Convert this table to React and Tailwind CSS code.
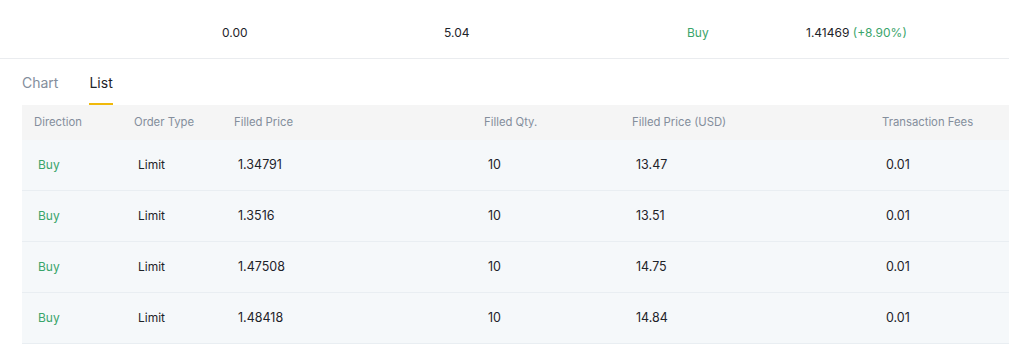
import React from "react";

const rows = [
  ["Buy", "Limit", "1.34791", "10", "13.47", "0.01"],
  ["Buy", "Limit", "1.3516", "10", "13.51", "0.01"],
  ["Buy", "Limit", "1.47508", "10", "14.75", "0.01"],
  ["Buy", "Limit", "1.48418", "10", "14.84", "0.01"],
];

const cols = "grid grid-cols-[100px_100px_250px_148px_250px_1fr]";

export default function App() {
  return (
    <div className="w-[1009px] h-[359px] bg-white overflow-hidden font-['Inter',sans-serif] text-[#1e2329]">
      <div className="h-[59px] border-b border-[#eaecef] grid grid-cols-[222px_222px_243px_119px_1fr] items-center text-[12px] pt-[7px]">
        <span></span>
        <span>0.00</span>
        <span>5.04</span>
        <span className="text-[#3aa56b]">Buy</span>
        <span>
          1.41469 <span className="text-[#3aa56b]">(+8.90%)</span>
        </span>
      </div>
      <div className="flex pl-[22px] gap-[31px] text-[14px] h-[46px]">
        <div className="flex items-center text-[#848e9c]">Chart</div>
        <div className="relative flex items-center">
          List
          <span className="absolute left-0 right-0 bottom-0 h-[2px] bg-[#f0b90b]"></span>
        </div>
      </div>
      <div className="ml-[22px]">
        <div className={`${cols} h-[35px] items-center bg-[#f5f5f5] text-[#848e9c] text-[11.3px]`}>
          <div className="pl-[12px]">Direction</div>
          <div className="pl-[12px]">Order Type</div>
          <div className="pl-[12px]">Filled Price</div>
          <div className="pl-[12px]">Filled Qty.</div>
          <div className="pl-[12px]">Filled Price (USD)</div>
          <div className="pl-[12px]">Transaction Fees</div>
        </div>
        {rows.map((r, i) => (
          <div key={i} className={`${cols} h-[51px] items-center bg-[#f5f8fa] border-b border-[#e9eef2] text-[12.5px]`}>
            <div className="pl-[16px] text-[#3aa56b] text-[12px]">{r[0]}</div>
            <div className="pl-[16px] text-[12px]">{r[1]}</div>
            <div className="pl-[16px]">{r[2]}</div>
            <div className="pl-[16px]">{r[3]}</div>
            <div className="pl-[16px]">{r[4]}</div>
            <div className="pl-[16px]">{r[5]}</div>
          </div>
        ))}
      </div>
    </div>
  );
}
